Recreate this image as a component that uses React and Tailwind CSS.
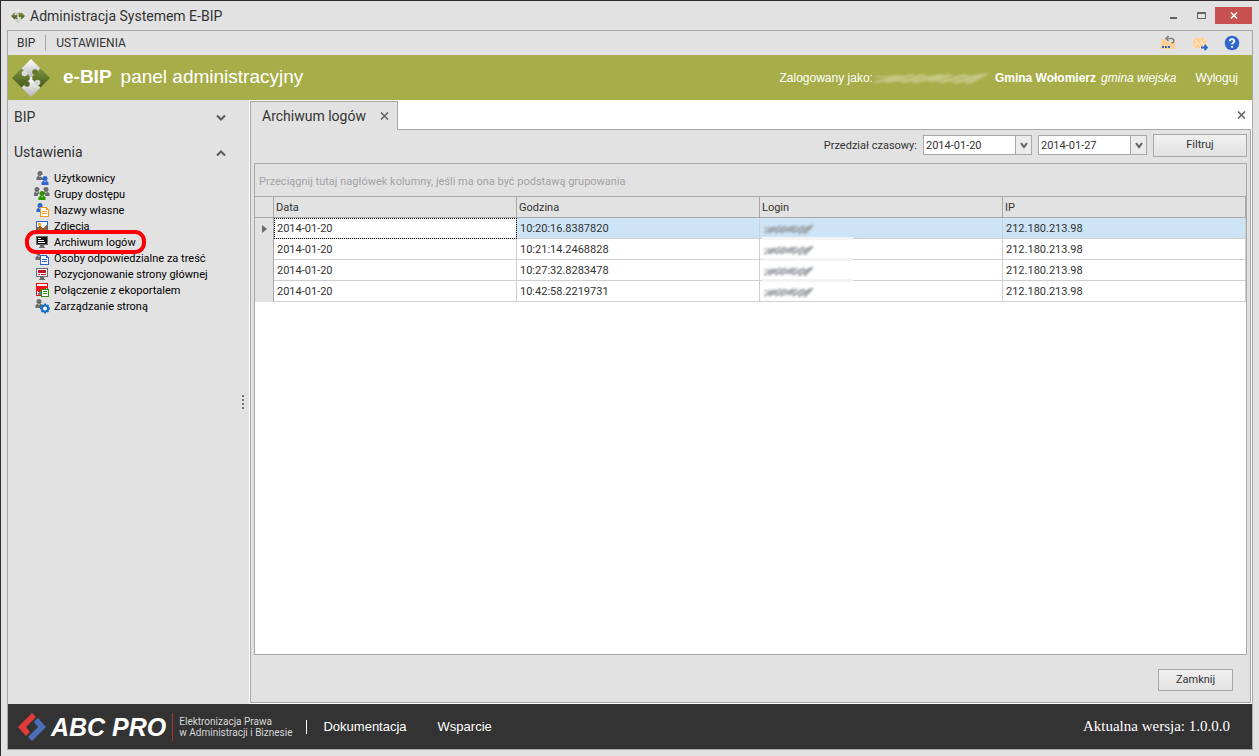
import { useState } from "react";

const rows = [
  { date: "2014-01-20", time: "10:20:16.8387820", ip: "212.180.213.98" },
  { date: "2014-01-20", time: "10:21:14.2468828", ip: "212.180.213.98" },
  { date: "2014-01-20", time: "10:27:32.8283478", ip: "212.180.213.98" },
  { date: "2014-01-20", time: "10:42:58.2219731", ip: "212.180.213.98" },
];

function Person({ x = 0, y = 0, color }) {
  return (
    <g transform={`translate(${x} ${y})`} fill={color} shapeRendering="auto">
      <circle cx="4" cy="2.500" r="2.500" />
      <path d="M2 5h4l1.500 1.500V9h-7V6.500z" />
      <path d="M3.300 5h1.400L4 6.500z" fill="#fff" />
    </g>
  );
}

function Doc({ color }) {
  return (
    <g>
      <path d="M6 5h6l3 3v7H6z" fill={color} />
      <path d="M7 6h5v2h2v6H7z" fill="#fff" />
      <path d="M8 9h5v1H8zM8 11h5v1H8z" fill={color} />
    </g>
  );
}

function Screen({ face, line }) {
  return (
    <g>
      <path d="M2 2h12v9H2zM6 11h4v2h1v1H5v-1h1z" fill="#6b6b6b" />
      <path d="M3 3h10v7H3z" fill={face} />
      <path d={line.d} fill={line.color} />
    </g>
  );
}

const icons = {
  users: (
    <>
      <Person x={2} y={1} color="#6b6b6b" />
      <path d="M7 5h7v3H8z" fill="#e2e2e2" />
      <Person x={7} y={6} color="#2f66cc" />
    </>
  ),
  groups: (
    <>
      <Person x={-1} y={1} color="#6b6b6b" />
      <Person x={8} y={1} color="#6b6b6b" />
      <path d="M5 4h5v4h1v2H4V8h1z" fill="#e2e2e2" />
      <Person x={4} y={5} color="#2b9400" />
    </>
  ),
  names: (
    <>
      <Person x={2} y={1} color="#2f66cc" />
      <Doc color="#f39a1b" />
    </>
  ),
  photos: (
    <>
      <path d="M2 3h12v10H2z" fill="#2f66cc" />
      <path d="M3 4h10v8H3z" fill="#fff" />
      <path d="M3 9l3-1 3 2 4-3v5H3z" fill="#a5601d" />
      <path d="M4 5h3v3H4z" fill="#f8b334" />
    </>
  ),
  logs: <Screen face="#111" line={{ d: "M4 4h3v1H4zM4 6h6v1H4zM4 8h7v1H4z", color: "#fff" }} />,
  people: (
    <>
      <Person x={1} y={1} color="#6b6b6b" />
      <Person x={7} y={1} color="#6b6b6b" />
      <path d="M6 4h10v11H6z" fill="#e2e2e2" />
      <Doc color="#2f66cc" />
    </>
  ),
  position: (
    <Screen
      face="#fff"
      line={{ d: "M4 4h8v3H4zM4 8h2v1H4zM7 8h5v1H7z", color: "#c3122b" }}
    />
  ),
  eco: (
    <>
      <path d="M2 1h12v13H2z" fill="#f01018" />
      <path d="M3 2h10v2H3z" fill="#fff" />
      <path d="M3 13V9c3 2 6-1 10-3v7z" fill="#e6ecf2" />
      <path d="M4 13c0-2 1-3 3-4v4z" fill="#5f7d99" />
      <path d="M7 7h8v8H7z" fill="#2b9400" />
      <path d="M8 8h6v6H8z" fill="#fff" />
      <path d="M9 9h4v1H9zM9 11h4v1H9z" fill="#2b9400" />
    </>
  ),
  manage: (
    <>
      <Person x={1} y={1} color="#6b6b6b" />
      <g stroke="#1670c4" fill="none" shapeRendering="auto">
        <circle cx="11" cy="10.500" r="3" strokeWidth="2" fill="#fff" />
        <path
          d="M11 5.500v2M11 13.500v2M6 10.500h2M14 10.500h2M7.500 7l1.400 1.400M13.100 12.600l1.400 1.400M7.500 14l1.400-1.400M13.100 8.400l1.400-1.400"
          strokeWidth="2"
        />
      </g>
    </>
  ),
};

const links = [
  { icon: "users", label: "Użytkownicy" },
  { icon: "groups", label: "Grupy dostępu" },
  { icon: "names", label: "Nazwy własne" },
  { icon: "photos", label: "Zdjęcia" },
  { icon: "logs", label: "Archiwum logów", marked: true },
  { icon: "people", label: "Osoby odpowiedzialne za treść" },
  { icon: "position", label: "Pozycjonowanie strony głównej" },
  { icon: "eco", label: "Połączenie z ekoportalem" },
  { icon: "manage", label: "Zarządzanie stroną" },
];

function PuzzleLogo({ className }) {
  return (
    <svg viewBox="0 0 38 38" className={className} aria-hidden="true">
      <defs>
        <linearGradient id="puzzleLight" x1="0" y1="0" x2="0" y2="1">
          <stop offset="0" stopColor="#fff" />
          <stop offset="1" stopColor="#b4b4b4" />
        </linearGradient>
        <linearGradient id="puzzleGreen" x1="0" y1="0" x2="0" y2="1">
          <stop offset="0" stopColor="#7d9440" />
          <stop offset="1" stopColor="#46591c" />
        </linearGradient>
      </defs>
      <path d="M19 0l9.500 9.500L19 19 9.500 9.500z" fill="url(#puzzleLight)" />
      <path d="M19 38l-9.500-9.500L19 19l9.500 9.500z" fill="url(#puzzleLight)" />
      <path d="M0 19l9.500-9.500L19 19l-9.500 9.500z" fill="url(#puzzleGreen)" />
      <path d="M38 19l-9.500-9.500L19 19l9.500 9.500z" fill="url(#puzzleGreen)" />
      <circle cx="12.500" cy="14.500" r="2.800" fill="#dcdcdc" />
      <circle cx="23" cy="13" r="2.800" fill="#64792f" />
      <circle cx="25.500" cy="23.500" r="2.800" fill="#d6d6d6" />
      <circle cx="15" cy="25" r="2.800" fill="#55692a" />
      <circle cx="19" cy="19" r="1.500" fill="#eee" />
    </svg>
  );
}

function Chevron({ up }) {
  return (
    <svg viewBox="0 0 12 8" className="h-2 w-3" fill="none" stroke="#5a5a5a" strokeWidth="2">
      <path d={up ? "M2 6.500l4-4 4 4" : "M2 1.500l4 4 4-4"} />
    </svg>
  );
}

function Cross({ className }) {
  return (
    <svg viewBox="0 0 9 8" className={className} fill="none" stroke="currentColor" strokeWidth="1.700">
      <path d="M1 0.500l7 7M8 0.500l-7 7" />
    </svg>
  );
}

// blurred diagonal hatching laid over private names
function Smudge({ className, color }) {
  return (
    <svg viewBox="0 0 52 14" preserveAspectRatio="none" className={className} aria-hidden="true">
      <g fill="none" stroke={color} className="blur-[1px]">
        <path
          d="M1 11l11-6M6 11l12-7M13 11l10-7M18 11l13-7M25 10l10-6M30 11l12-7M36 12l12-8M42 12l9-9"
          strokeWidth="1.800"
        />
        <path d="M1 6h14M4 9h20M18 6h16M26 9h18M36 6h13" strokeWidth="2" opacity="0.600" />
      </g>
    </svg>
  );
}

function DateBox({ label, value }) {
  const [date, setDate] = useState(value);
  return (
    <div className="flex h-5 w-[109px] border border-[#a8a8a8] bg-white">
      <input
        aria-label={label}
        className="min-w-0 flex-1 px-[2px] pt-[2px] text-[11px] outline-none"
        value={date}
        onChange={(e) => setDate(e.target.value)}
      />
      <button
        aria-label="Wybierz datę"
        className="flex w-4 items-center justify-center border-l border-[#a8a8a8] bg-[#ececec]"
      >
        <svg viewBox="0 0 8 7" className="h-[7px] w-2" fill="none" stroke="#5f5f5f" strokeWidth="2">
          <path d="M1 1l3 4 3-4" />
        </svg>
      </button>
    </div>
  );
}

function TitleBar() {
  return (
    <div className="flex h-[29px] items-center">
      <PuzzleLogo className="ml-1 size-[14px]" />
      <h1 className="ml-[5px] flex-1 text-[14px] leading-[18px]">Administracja Systemem E-BIP</h1>
      <button aria-label="Minimalizuj" className="flex h-4 w-7 items-end justify-center pb-[5px]">
        <span className="h-[2px] w-[7px] bg-[#666]" />
      </button>
      <button aria-label="Maksymalizuj" className="flex h-4 w-7 items-center justify-center">
        <span className="h-[7px] w-[9px] border border-t-2 border-[#666]" />
      </button>
      <button
        aria-label="Zamknij okno"
        className="mr-px flex h-[17px] w-[37px] items-center justify-center bg-[#c75050] text-white"
      >
        <Cross className="h-[7px] w-2" />
      </button>
    </div>
  );
}

function MenuBar() {
  return (
    <nav className="flex h-6 items-center">
      <button className="pr-2 pl-[9px] text-[12px] leading-4">BIP</button>
      <span className="ml-[2px] h-4 w-px bg-[#a8a8a8]" />
      <button className="px-[10px] text-[12px] leading-4">USTAWIENIA</button>
      <div className="ml-auto flex gap-4 pr-3">
        <button aria-label="Wróć">
          <svg viewBox="0 0 16 16" className="size-4">
            <path d="M1 4h4v2h3v1h5V5h2v9H1z" fill="#ffcf94" />
            <path d="M2 11h2v2H2zM5 11h2v2H5zM8 11h2v2H8z" fill="#2f66cc" />
            <path d="M6 3.500h5.500a2.200 2.200 0 010 4.500M8.500 1L6 3.500 8.500 6" fill="none" stroke="#808080" strokeWidth="1.500" />
          </svg>
        </button>
        <button aria-label="Wyślij wiadomość">
          <svg viewBox="0 0 16 16" className="size-4">
            <path d="M1 3h13v10H1z" fill="#ffcf94" />
            <path d="M1 3l6.500 6.500L14 3M1 13l4-5M14 13l-4-5" fill="none" stroke="#fff" strokeWidth="0.800" />
            <path d="M9 12.500h6M12.500 10l2.500 2.500-2.500 2.500" fill="none" stroke="#2f66cc" strokeWidth="1.800" />
          </svg>
        </button>
        <button aria-label="Pomoc">
          <svg viewBox="0 0 16 16" className="size-4">
            <circle cx="8" cy="8" r="7.300" fill="#2f66cc" />
            <path d="M5.700 6.200a2.300 2.100 0 114.600 0c0 1.500-2.300 1.500-2.300 3.300M8 11v1.800" fill="none" stroke="#fff" strokeWidth="1.800" />
          </svg>
        </button>
      </div>
    </nav>
  );
}

function Banner() {
  return (
    <header className="flex h-[45px] items-center bg-[#a7ad48] pr-[14px] pl-1 font-['Liberation_Sans',sans-serif] text-white">
      <PuzzleLogo className="size-[38px]" />
      <h2 className="ml-[13px] text-[19px]">
        <b>e-BIP</b>
        <span className="ml-[9px]">panel administracyjny</span>
      </h2>
      <div className="ml-auto flex items-center text-[12px]">
        <span>Zalogowany jako:</span>
        <Smudge className="h-4 w-[116px]" color="#c9cd8e" />
        <b className="ml-[6px]">Gmina Wołomierz</b>
        <i className="ml-[5px]">gmina wiejska</i>
        <a href="#wyloguj" className="ml-[19px]">
          Wyloguj
        </a>
      </div>
    </header>
  );
}

function Sidebar() {
  const [open, setOpen] = useState(true);
  const header = "flex h-[35px] w-full items-center justify-between pr-[22px] pl-[6px] text-[14px]";
  return (
    <aside className="relative w-[241px] shrink-0">
      <button className={header}>
        BIP
        <Chevron />
      </button>
      <button className={header} onClick={() => setOpen(!open)}>
        Ustawienia
        <Chevron up={open} />
      </button>
      {open && (
        <ul className="pl-[26px] text-[11px] text-black">
          {links.map((link) => (
            <li key={link.label} className="relative h-4">
              <a href="#ustawienia" className="flex h-4 items-center gap-1 whitespace-nowrap">
                <svg viewBox="0 0 16 16" className="size-4" shapeRendering="crispEdges">
                  {icons[link.icon]}
                </svg>
                <span className="pt-[2px] leading-4">{link.label}</span>
              </a>
              {link.marked && (
                <span className="pointer-events-none absolute -top-1 -left-[9px] z-10 h-6 w-[121px] rounded-[11px] border-4 border-[#fb0007]" />
              )}
            </li>
          ))}
        </ul>
      )}
      {/* splitter grip */}
      <div className="absolute top-1/2 right-[5px] flex -translate-y-1/2 flex-col gap-[2px]">
        <span className="size-[2px] bg-[#777]" />
        <span className="size-[2px] bg-[#777]" />
        <span className="size-[2px] bg-[#777]" />
        <span className="size-[2px] bg-[#777]" />
      </div>
    </aside>
  );
}

function LogTable() {
  const th = "border-t border-r border-b border-[#a8a8a8] bg-[#e2e2e2] px-[2px] pt-[2px] text-left font-normal";
  return (
    <table className="w-full table-fixed border-separate border-spacing-0 text-[11px] leading-[14px]">
      <thead>
        <tr className="h-[22px]">
          <th className={`${th} w-[19px]`} aria-label="Wskaźnik" />
          <th className={th}>Data</th>
          <th className={th}>Godzina</th>
          <th className={th}>Login</th>
          <th className={th}>IP</th>
        </tr>
      </thead>
      <tbody>
        {rows.map((row, i) => {
          const td = `border-r border-b border-[#cfcfcf] px-[3px] pt-[2px] ${i === 0 ? "bg-[#cce4f6]" : "bg-white"}`;
          return (
            <tr key={row.time} className="h-[21px]">
              <td className="border-r border-[#a8a8a8] bg-[#e2e2e2]">
                {i === 0 && (
                  <svg viewBox="0 0 5 8" className="ml-[7px] h-2 w-[5px]">
                    <path d="M0 0l5 4-5 4z" fill="#6a6a6a" />
                  </svg>
                )}
              </td>
              {i === 0 ? (
                <td className="border-r border-b border-[#cfcfcf] bg-white px-[3px] pt-[2px] outline-1 -outline-offset-1 outline-dotted outline-black">
                  {row.date}
                </td>
              ) : (
                <td className={td}>{row.date}</td>
              )}
              <td className={td}>{row.time}</td>
              <td className={`${td} relative`}>
                <Smudge className="h-[14px] w-[51px]" color="#9b9ea3" />
                {i < 3 && <span className="absolute -bottom-[2px] left-[2px] z-10 h-[3px] w-[91px] bg-[#f4f4f4]" />}
              </td>
              <td className={td}>{row.ip}</td>
            </tr>
          );
        })}
      </tbody>
    </table>
  );
}

const buttonStyle =
  "border border-[#a8a8a8] bg-gradient-to-b from-[#f0f0f0] to-[#e2e2e2] text-[11px] leading-4";

function Content() {
  return (
    <main className="flex min-w-0 flex-1 flex-col bg-white px-px pb-px">
      <div className="flex h-[29px] items-end">
        <div className="relative z-10 -mb-px flex h-[29px] items-center gap-[14px] border border-b-0 border-[#a8a8a8] bg-[#e2e2e2] pr-2 pl-[11px]">
          <span className="text-[14px]">Archiwum logów</span>
          <button aria-label="Zamknij kartę">
            <Cross className="h-2 w-[9px] text-[#6a6a6a]" />
          </button>
        </div>
        <button aria-label="Zamknij panel" className="mr-[5px] mb-[10px] ml-auto">
          <Cross className="h-2 w-[9px] text-[#6a6a6a]" />
        </button>
      </div>
      <section className="flex flex-1 flex-col border border-[#a8a8a8] bg-[#e2e2e2] px-[3px]">
        <div className="flex h-[33px] items-center justify-end gap-[6px] pb-[3px] text-[11px]">
          <span className="pt-[2px]">Przedział czasowy:</span>
          <DateBox label="Data od" value="2014-01-20" />
          <DateBox label="Data do" value="2014-01-27" />
          <button className={`${buttonStyle} h-[23px] w-[94px]`}>Filtruj</button>
        </div>
        <div className="flex-1 border border-[#a8a8a8] bg-white">
          <p className="h-8 bg-[#e2e2e2] pl-1 text-[11px] leading-9 text-[#a3a3a3]">
            Przeciągnij tutaj nagłówek kolumny, jeśli ma ona być podstawą grupowania
          </p>
          <LogTable />
        </div>
        <div className="flex h-[47px] items-center justify-end pt-[3px] pr-[14px]">
          <button className={`${buttonStyle} h-[22px] w-[75px]`}>Zamknij</button>
        </div>
      </section>
    </main>
  );
}

function Footer() {
  return (
    <footer className="flex h-[45px] items-center bg-[#333] pr-[22px] pl-[10px] font-['Liberation_Sans',sans-serif] text-white">
      <svg viewBox="0 0 28 28" className="size-7" aria-hidden="true">
        <path d="M0 14L14 0l4 4-10 10 4 5-4 4z" fill="#e03a3a" />
        <path d="M28 14L14 28l-4-4 10-10-4-5 4-4z" fill="#4a6fb8" />
      </svg>
      <b className="ml-[5px] text-[25px] leading-7 italic">ABC PRO</b>
      <span className="ml-[6px] h-7 w-px bg-[#a33]" />
      <p className="ml-[6px] font-['Roboto',sans-serif] text-[10px] leading-[11px] text-[#d8d8d8]">
        Elektronizacja Prawa
        <br />w Administracji i Biznesie
      </p>
      <span className="ml-[14px] h-[14px] w-px bg-white" />
      <a href="#dokumentacja" className="ml-4 text-[13px]">
        Dokumentacja
      </a>
      <a href="#wsparcie" className="ml-[31px] text-[13px]">
        Wsparcie
      </a>
      <span className="ml-auto font-['Liberation_Serif',serif] text-[15px]">Aktualna wersja: 1.0.0.0</span>
    </footer>
  );
}

export default function App() {
  return (
    <div className="flex min-h-screen flex-col border-t border-l border-[#2f2b2e] bg-[#e2e2e2] pr-[6px] pb-[6px] pl-[6px] font-['Roboto',sans-serif] text-[#333]">
      <TitleBar />
      <div className="flex flex-1 flex-col border border-[#a8a8a8]">
        <MenuBar />
        <Banner />
        <div className="flex flex-1">
          <Sidebar />
          <Content />
        </div>
        <Footer />
      </div>
    </div>
  );
}
